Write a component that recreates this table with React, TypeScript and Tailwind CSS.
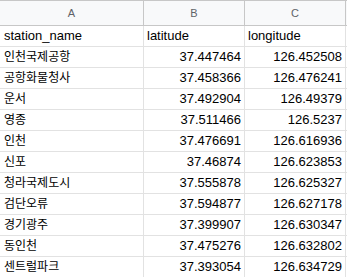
import React from "react";

const rows: [string, string, string][] = [
  ["인천국제공항", "37.447464", "126.452508"],
  ["공항화물청사", "37.458366", "126.476241"],
  ["운서", "37.492904", "126.49379"],
  ["영종", "37.511466", "126.5237"],
  ["인천", "37.476691", "126.616936"],
  ["신포", "37.46874", "126.623853"],
  ["청라국제도시", "37.555878", "126.625327"],
  ["검단오류", "37.594877", "126.627178"],
  ["경기광주", "37.399907", "126.630347"],
  ["동인천", "37.475276", "126.632802"],
  ["센트럴파크", "37.393054", "126.634729"],
];

export default function App() {
  return (
    <div
      className="w-[347px] h-[277px] overflow-hidden bg-white text-[13px] text-[#000]"
      style={{ fontFamily: '"Liberation Sans", "Noto Sans CJK KR", sans-serif' }}
    >
      <div className="flex h-[26px] bg-[#f8f9fa] border-t border-b border-[#c7c7c7] text-[11px] text-[#5f6368]">
        <div className="w-[144px] shrink-0 border-r border-[#c7c7c7] flex items-center justify-center">A</div>
        <div className="w-[101px] shrink-0 border-r border-[#c7c7c7] flex items-center justify-center">B</div>
        <div className="w-[101px] shrink-0 border-r border-[#c7c7c7] flex items-center justify-center">C</div>
        <div className="flex-1" />
      </div>
      <div className="flex h-[21px] border-b border-[#e2e2e2]">
        <div className="w-[144px] shrink-0 border-r border-[#e2e2e2] flex items-center pl-[4px]">station_name</div>
        <div className="w-[101px] shrink-0 border-r border-[#e2e2e2] flex items-center pl-[3px]">latitude</div>
        <div className="w-[101px] shrink-0 border-r border-[#e2e2e2] flex items-center pl-[3px]">longitude</div>
        <div className="flex-1" />
      </div>
      {rows.map((r, i) => (
        <div key={i} className="flex h-[21px] border-b border-[#e2e2e2]">
          <div className="w-[144px] shrink-0 border-r border-[#e2e2e2] flex items-center pl-[4px] text-[12px]">{r[0]}</div>
          <div className="w-[101px] shrink-0 border-r border-[#e2e2e2] flex items-center justify-end pr-[3px]">{r[1]}</div>
          <div className="w-[101px] shrink-0 border-r border-[#e2e2e2] flex items-center justify-end pr-[3px]">{r[2]}</div>
          <div className="flex-1" />
        </div>
      ))}
    </div>
  );
}
